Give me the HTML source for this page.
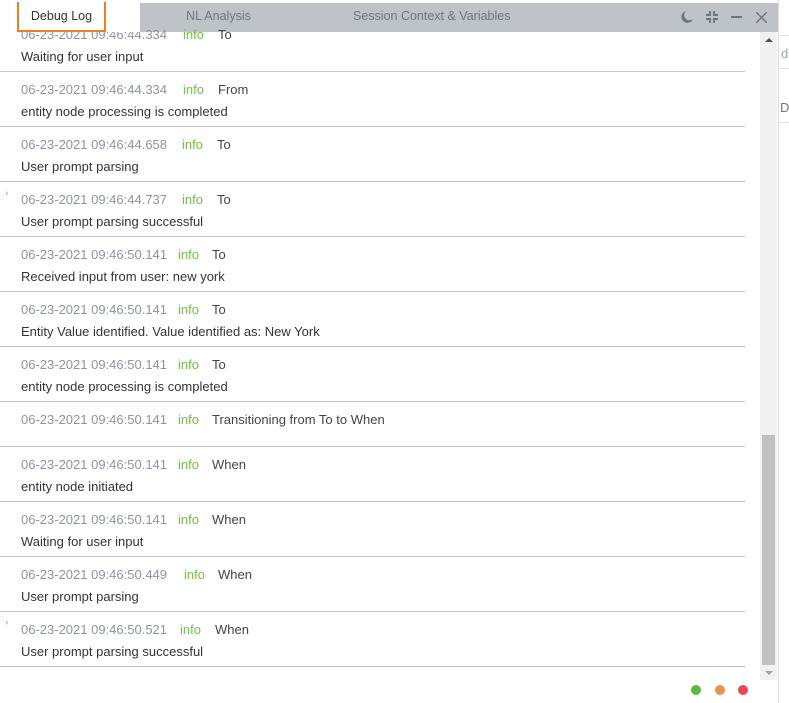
<!DOCTYPE html>
<html><head><meta charset="utf-8"><style>
*{margin:0;padding:0;box-sizing:border-box}
body{width:789px;height:703px;background:#fff;font-family:"Liberation Sans",sans-serif;font-size:13px;position:relative;overflow:hidden}
.bar{position:absolute;left:0;top:3px;width:778px;height:29px;background:#bfc2c6}
.tab{position:absolute;top:3px;height:29px;line-height:27px;color:#6f7580;font-size:12.5px}
.t1{left:0;width:140px;background:#fff}
.box{position:absolute;left:17px;top:2px;width:89px;height:30px;border:2px solid #f47c20;border-top:none;color:#333;text-align:center;line-height:29px;font-size:12.5px}
.abs{position:absolute;white-space:nowrap}
.ts{color:#8e93a3}
.inf{color:#72bf44}
.dir{color:#444}
.msg{color:#333}
.sep{position:absolute;left:0;width:745px;height:1px;background:#c3c3c8}
</style></head><body>
<div class="bar"></div>
<div class="tab" style="left:186px">NL Analysis</div>
<div class="tab" style="left:353px">Session Context &amp; Variables</div>
<svg class="abs" style="left:680px;top:10px" width="14" height="14" viewBox="0 0 14 14"><path d="M6 1A6 6 0 1 0 13 9 5 5 0 0 1 6 1z" fill="#6f7580"/></svg>
<svg class="abs" style="left:706px;top:11px" width="12" height="12" viewBox="0 0 12 12" stroke="#6f7580" stroke-width="2" fill="none"><path d="M4 0v4H0M8 0v4h4M4 12V8H0M8 12V8h4"/></svg>
<div class="abs" style="left:731px;top:16px;width:11px;height:2px;background:#6f7580"></div>
<svg class="abs" style="left:756px;top:12px" width="11" height="11" viewBox="0 0 11 11" stroke="#6f7580" stroke-width="1.5"><path d="M0 0L11 11M11 0L0 11"/></svg>
<div class="abs" style="left:778px;top:0;width:1px;height:703px;background:#ddd"></div>
<div class="abs" style="left:779px;top:35px;width:10px;height:1px;background:#e3e3e3"></div>
<div class="abs" style="left:779px;top:68px;width:10px;height:1px;background:#e3e3e3"></div>
<div class="abs" style="left:779px;top:122px;width:10px;height:1px;background:#e3e3e3"></div>
<div class="abs" style="left:781px;top:46px;color:#9aa">d</div>
<div class="abs" style="left:780px;top:100px;color:#777">D</div>
<div class="abs" style="left:760px;top:32px;width:17px;height:648px;background:#f1f1f1"></div>
<div class="abs" style="left:762px;top:435px;width:13px;height:230px;background:#c1c1c1"></div>
<div class="abs" style="left:765px;top:38px;width:0;height:0;border-left:4px solid transparent;border-right:4px solid transparent;border-bottom:4px solid #505050"></div>
<div class="abs" style="left:765px;top:671px;width:0;height:0;border-left:4px solid transparent;border-right:4px solid transparent;border-top:4px solid #a0a0a0"></div>
<div class="abs" style="left:691px;top:685px;width:10px;height:10px;border-radius:50%;background:#5fb83a"></div>
<div class="abs" style="left:715px;top:685px;width:10px;height:10px;border-radius:50%;background:#e8944a"></div>
<div class="abs" style="left:738px;top:685px;width:10px;height:10px;border-radius:50%;background:#e84a4f"></div>
<div class="abs ts" style="left:21px;top:27px">06-23-2021 09:46:44.334</div><div class="abs inf" style="left:183px;top:27px">info</div><div class="abs dir" style="left:218px;top:27px">To</div>
<div class="abs msg" style="left:21px;top:49px">Waiting for user input</div>
<div class="sep" style="top:71px"></div>
<div class="abs ts" style="left:21px;top:82px">06-23-2021 09:46:44.334</div><div class="abs inf" style="left:183px;top:82px">info</div><div class="abs dir" style="left:218px;top:82px">From</div><div class="abs msg" style="left:21px;top:104px">entity node processing is completed</div>
<div class="sep" style="top:126px"></div>
<div class="abs ts" style="left:21px;top:137px">06-23-2021 09:46:44.658</div><div class="abs inf" style="left:182px;top:137px">info</div><div class="abs dir" style="left:217px;top:137px">To</div><div class="abs msg" style="left:21px;top:159px">User prompt parsing</div>
<div class="sep" style="top:181px"></div>
<div class="abs" style="left:5px;top:188px;color:#999;font-size:10px">›</div>
<div class="abs ts" style="left:21px;top:192px">06-23-2021 09:46:44.737</div><div class="abs inf" style="left:182px;top:192px">info</div><div class="abs dir" style="left:217px;top:192px">To</div><div class="abs msg" style="left:21px;top:214px">User prompt parsing successful</div>
<div class="sep" style="top:236px"></div>
<div class="abs ts" style="left:21px;top:247px">06-23-2021 09:46:50.141</div><div class="abs inf" style="left:178px;top:247px">info</div><div class="abs dir" style="left:212px;top:247px">To</div><div class="abs msg" style="left:21px;top:269px">Received input from user: new york</div>
<div class="sep" style="top:291px"></div>
<div class="abs ts" style="left:21px;top:302px">06-23-2021 09:46:50.141</div><div class="abs inf" style="left:178px;top:302px">info</div><div class="abs dir" style="left:212px;top:302px">To</div><div class="abs msg" style="left:21px;top:324px">Entity Value identified. Value identified as: New York</div>
<div class="sep" style="top:346px"></div>
<div class="abs ts" style="left:21px;top:357px">06-23-2021 09:46:50.141</div><div class="abs inf" style="left:178px;top:357px">info</div><div class="abs dir" style="left:212px;top:357px">To</div><div class="abs msg" style="left:21px;top:379px">entity node processing is completed</div>
<div class="sep" style="top:401px"></div>
<div class="abs ts" style="left:21px;top:412px">06-23-2021 09:46:50.141</div><div class="abs inf" style="left:178px;top:412px">info</div><div class="abs dir" style="left:212px;top:412px">Transitioning from To to When</div>
<div class="sep" style="top:446px"></div>
<div class="abs ts" style="left:21px;top:457px">06-23-2021 09:46:50.141</div><div class="abs inf" style="left:178px;top:457px">info</div><div class="abs dir" style="left:212px;top:457px">When</div><div class="abs msg" style="left:21px;top:479px">entity node initiated</div>
<div class="sep" style="top:501px"></div>
<div class="abs ts" style="left:21px;top:512px">06-23-2021 09:46:50.141</div><div class="abs inf" style="left:178px;top:512px">info</div><div class="abs dir" style="left:212px;top:512px">When</div><div class="abs msg" style="left:21px;top:534px">Waiting for user input</div>
<div class="sep" style="top:556px"></div>
<div class="abs ts" style="left:21px;top:567px">06-23-2021 09:46:50.449</div><div class="abs inf" style="left:184px;top:567px">info</div><div class="abs dir" style="left:218px;top:567px">When</div><div class="abs msg" style="left:21px;top:589px">User prompt parsing</div>
<div class="sep" style="top:611px"></div>
<div class="abs" style="left:5px;top:617px;color:#999;font-size:10px">›</div>
<div class="abs ts" style="left:21px;top:622px">06-23-2021 09:46:50.521</div><div class="abs inf" style="left:180px;top:622px">info</div><div class="abs dir" style="left:215px;top:622px">When</div><div class="abs msg" style="left:21px;top:644px">User prompt parsing successful</div>
<div class="sep" style="top:666px"></div>
<div class="tab t1"></div>
<div class="box">Debug Log</div>
</body></html>
